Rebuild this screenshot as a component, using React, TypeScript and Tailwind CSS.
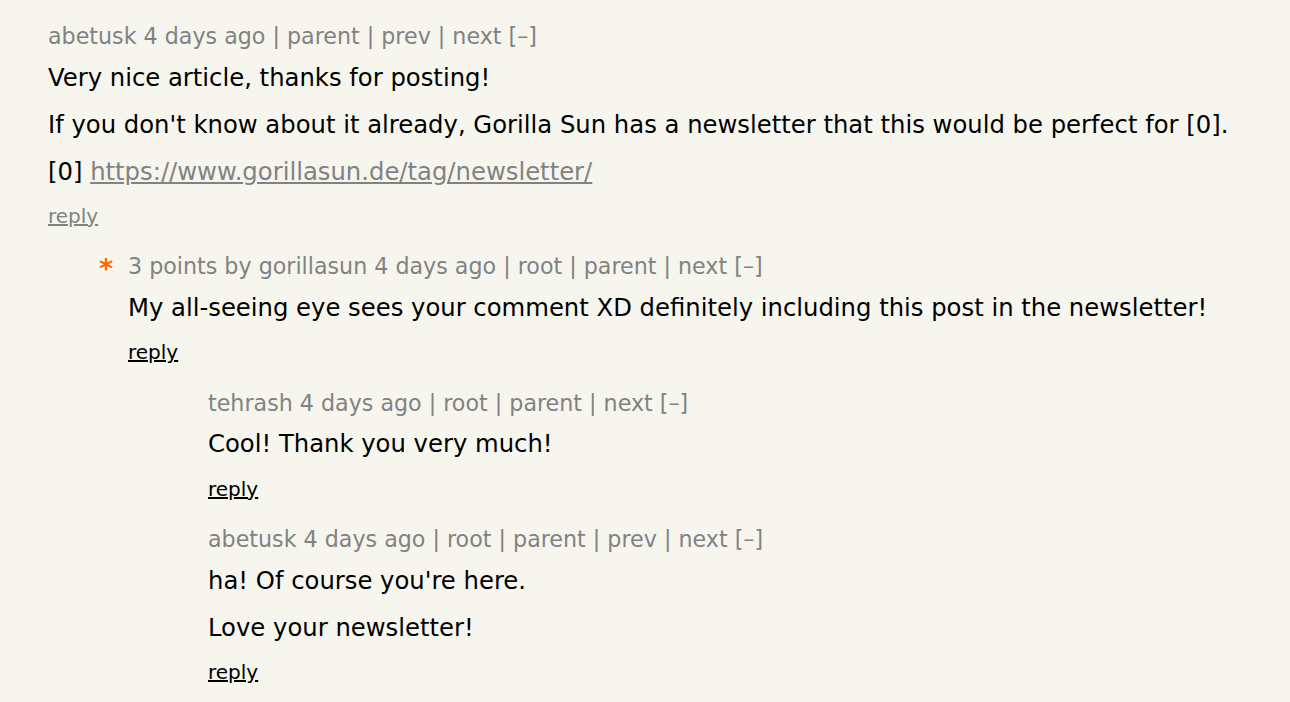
type CommentProps = {
  depth: number;
  star?: boolean;
  meta: string;
  paragraphs: React.ReactNode[];
  grayReply?: boolean;
};

const Comment = ({ depth, star, meta, paragraphs, grayReply }: CommentProps) => {
  return (
    <div className="flex">
      {/* indent + vote column */}
      <div className={depth === 0 ? 'w-0' : depth === 1 ? 'w-[80px]' : 'w-[160px]'}>
        {star && (
          <div className="flex justify-end pr-[15px] pt-[3px] text-[27px] font-bold leading-[28px] text-[#ff6600]">
            *
          </div>
        )}
      </div>
      <div className="flex flex-col">
        <div className="text-[22.2px] leading-[28px] text-[#828282]">{meta}</div>
        {paragraphs.map((p, i) => (
          <p
            key={i}
            className={
              i === 0
                ? 'mt-[13.5px] text-[24.3px] leading-[28px] text-black'
                : 'mt-[19px] text-[24.3px] leading-[28px] text-black'
            }
          >
            {p}
          </p>
        ))}
        <div className="mt-[16.5px] text-[20px] leading-[28px]">
          <a
            href="#"
            className={grayReply ? 'text-[#828282] underline' : 'text-black underline'}
          >
            reply
          </a>
        </div>
      </div>
    </div>
  );
};

const App = () => {
  return (
    <div className="min-h-screen bg-[#f6f6ef] font-['DejaVu_Sans',Verdana,sans-serif]">
      <div className="flex flex-col gap-[22.4px] pl-[48px] pt-[22px]">
        <Comment
          depth={0}
          grayReply
          meta="abetusk 4 days ago | parent | prev | next [–]"
          paragraphs={[
            'Very nice article, thanks for posting!',
            "If you don't know about it already, Gorilla Sun has a newsletter that this would be perfect for [0].",
            <>
              [0]{' '}
              <a href="#" className="text-[#828282] underline">
                https://www.gorillasun.de/tag/newsletter/
              </a>
            </>,
          ]}
        />
        <Comment
          depth={1}
          star
          meta="3 points by gorillasun 4 days ago | root | parent | next [–]"
          paragraphs={[
            'My all-seeing eye sees your comment XD definitely including this post in the newsletter!',
          ]}
        />
        <Comment
          depth={2}
          meta="tehrash 4 days ago | root | parent | next [–]"
          paragraphs={['Cool! Thank you very much!']}
        />
        <Comment
          depth={2}
          meta="abetusk 4 days ago | root | parent | prev | next [–]"
          paragraphs={["ha! Of course you're here.", 'Love your newsletter!']}
        />
      </div>
    </div>
  );
};

export default App;
